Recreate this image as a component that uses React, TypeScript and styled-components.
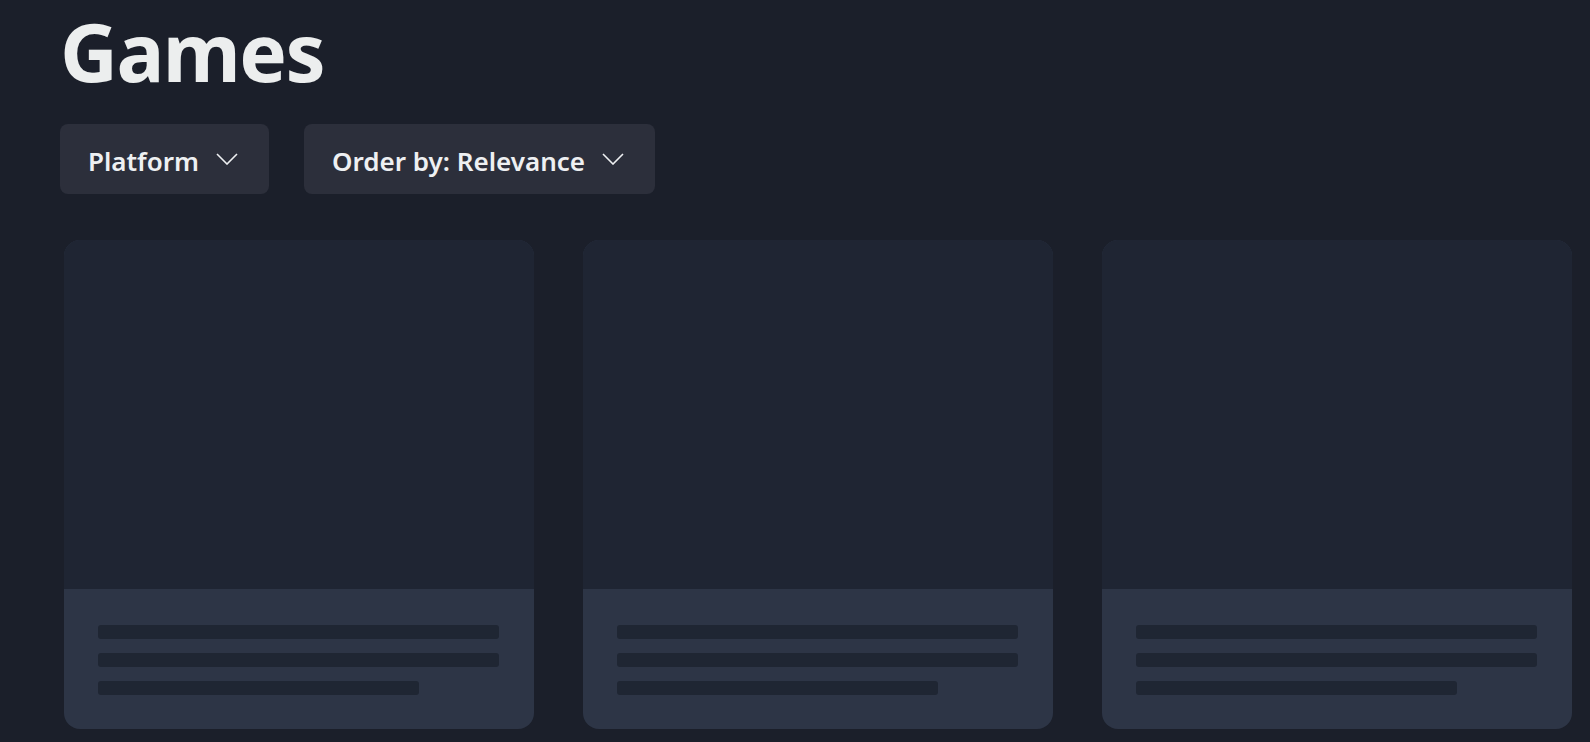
import React from "react";
import styled, { createGlobalStyle } from "styled-components";

const GlobalStyle = createGlobalStyle`
  html, body {
    margin: 0;
    padding: 0;
    background: #1b1f2a;
    overflow: hidden;
  }
  body {
    font-family: "Noto Sans", "Open Sans", sans-serif;
    color: #eceeee;
  }
`;

const Page = styled.main`
  min-height: 742px;
  padding: 0 60px;
  box-sizing: border-box;
`;

const Title = styled.h1`
  margin: 0;
  padding-top: 3px;
  font-size: 80px;
  font-weight: 700;
  line-height: 96px;
  letter-spacing: -1.5px;
  color: #eceeee;
`;

const Filters = styled.div`
  display: flex;
  gap: 35px;
  margin-top: 25px;
`;

const Dropdown = styled.button`
  display: flex;
  align-items: center;
  gap: 17px;
  height: 70px;
  padding: 0 31px 0 28px;
  border: none;
  border-radius: 8px;
  background: #2c2f3b;
  color: #eef0f2;
  font-family: "Noto Sans", "Open Sans", sans-serif;
  font-size: 26px;
  font-weight: 600;
  cursor: pointer;
`;

const Label = styled.span`
  padding-top: 3px;
`;

const Chevron = () => (
  <svg width="22" height="12" viewBox="0 0 22 12" fill="none">
    <polyline points="1,1 11,11 21,1" stroke="#eef0f2" strokeWidth="1.6" />
  </svg>
);

const Grid = styled.section`
  display: grid;
  grid-template-columns: repeat(3, 470px);
  column-gap: 49px;
  margin-top: 46px;
  padding-left: 4px;
`;

const Card = styled.article`
  display: flex;
  flex-direction: column;
  height: 489px;
  border-radius: 16px;
  overflow: hidden;
  background: #2d3546;
`;

const Cover = styled.div`
  height: 349px;
  background: #1f2533;
`;

const Body = styled.div`
  display: flex;
  flex-direction: column;
  gap: 14px;
  padding: 36px 35px 0 34px;
`;

const Line = styled.div<{ $width: string }>`
  width: ${(p) => p.$width};
  height: 14px;
  border-radius: 3px;
  background: #1f2633;
`;

const SkeletonCard = () => (
  <Card>
    <Cover />
    <Body>
      <Line $width="100%" />
      <Line $width="100%" />
      <Line $width="80%" />
    </Body>
  </Card>
);

export default function App() {
  return (
    <>
      <GlobalStyle />
      <Page>
        <Title>Games</Title>
        <Filters>
          <Dropdown>
            <Label>Platform</Label>
            <Chevron />
          </Dropdown>
          <Dropdown>
            <Label>Order by: Relevance</Label>
            <Chevron />
          </Dropdown>
        </Filters>
        <Grid>
          {[0, 1, 2].map((i) => (
            <SkeletonCard key={i} />
          ))}
        </Grid>
      </Page>
    </>
  );
}
